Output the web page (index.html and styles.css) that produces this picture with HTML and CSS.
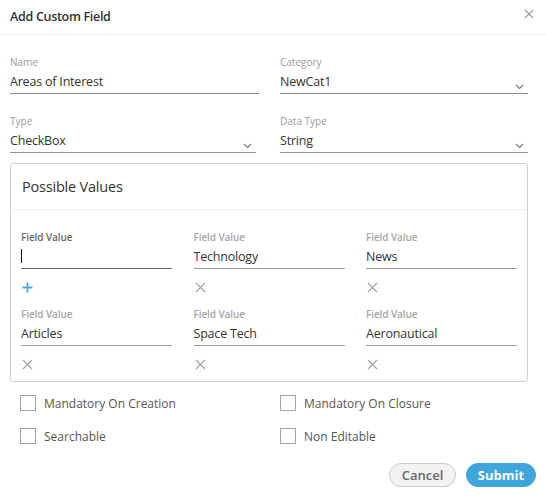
FILE: index.html
```html
<!DOCTYPE html>
<html>
<head>
<meta charset="utf-8">
<link rel="stylesheet" href="styles.css">
</head>
<body>
<div class="dialog">
  <div class="dlg-header">
    <span class="dlg-title">Add Custom Field</span>
    <svg class="close" width="10" height="10" viewBox="0 0 10 10"><path d="M1 1L9 9M9 1L1 9" stroke="#9a9a9a" stroke-width="1.1" fill="none"/></svg>
  </div>
  <div class="dlg-body">
    <div class="form-grid">
      <div class="field">
        <div class="label">Name</div>
        <div class="input">Areas of Interest</div>
      </div>
      <div class="field">
        <div class="label">Category</div>
        <div class="input select">NewCat1<svg class="chev" width="9" height="6" viewBox="0 0 9 6"><path d="M1 1L4.5 4.5L8 1" stroke="#777" stroke-width="1.1" fill="none"/></svg></div>
      </div>
      <div class="field">
        <div class="label">Type</div>
        <div class="input select narrow">CheckBox<svg class="chev" width="9" height="6" viewBox="0 0 9 6"><path d="M1 1L4.5 4.5L8 1" stroke="#777" stroke-width="1.1" fill="none"/></svg></div>
      </div>
      <div class="field">
        <div class="label">Data Type</div>
        <div class="input select">String<svg class="chev" width="9" height="6" viewBox="0 0 9 6"><path d="M1 1L4.5 4.5L8 1" stroke="#777" stroke-width="1.1" fill="none"/></svg></div>
      </div>
    </div>

    <div class="panel">
      <div class="panel-head">Possible Values</div>
      <div class="panel-body">
        <div class="fv">
          <div class="fv-label focus">Field Value</div>
          <div class="fv-input focus"><span class="caret"></span></div>
          <div class="fv-act"><svg width="11" height="11" viewBox="0 0 11 11"><path d="M5.5 0.5V10.5M0.5 5.5H10.5" stroke="#4aa8e0" stroke-width="1.8" fill="none"/></svg></div>
        </div>
        <div class="fv">
          <div class="fv-label">Field Value</div>
          <div class="fv-input">Technology</div>
          <div class="fv-act"><svg width="11" height="11" viewBox="0 0 11 11"><path d="M1 1L10 10M10 1L1 10" stroke="#a0a0a0" stroke-width="1.1" fill="none"/></svg></div>
        </div>
        <div class="fv">
          <div class="fv-label">Field Value</div>
          <div class="fv-input">News</div>
          <div class="fv-act"><svg width="11" height="11" viewBox="0 0 11 11"><path d="M1 1L10 10M10 1L1 10" stroke="#a0a0a0" stroke-width="1.1" fill="none"/></svg></div>
        </div>
        <div class="fv">
          <div class="fv-label">Field Value</div>
          <div class="fv-input">Articles</div>
          <div class="fv-act"><svg width="11" height="11" viewBox="0 0 11 11"><path d="M1 1L10 10M10 1L1 10" stroke="#a0a0a0" stroke-width="1.1" fill="none"/></svg></div>
        </div>
        <div class="fv">
          <div class="fv-label">Field Value</div>
          <div class="fv-input">Space Tech</div>
          <div class="fv-act"><svg width="11" height="11" viewBox="0 0 11 11"><path d="M1 1L10 10M10 1L1 10" stroke="#a0a0a0" stroke-width="1.1" fill="none"/></svg></div>
        </div>
        <div class="fv">
          <div class="fv-label">Field Value</div>
          <div class="fv-input">Aeronautical</div>
          <div class="fv-act"><svg width="11" height="11" viewBox="0 0 11 11"><path d="M1 1L10 10M10 1L1 10" stroke="#a0a0a0" stroke-width="1.1" fill="none"/></svg></div>
        </div>
      </div>
    </div>

    <div class="checks">
      <label class="check"><span class="box"></span>Mandatory On Creation</label>
      <label class="check"><span class="box"></span>Mandatory On Closure</label>
      <label class="check"><span class="box"></span>Searchable</label>
      <label class="check"><span class="box"></span>Non Editable</label>
    </div>

    <div class="actions">
      <button class="btn cancel">Cancel</button>
      <button class="btn submit">Submit</button>
    </div>
  </div>
</div>
</body>
</html>
```

FILE: styles.css
```css
* { box-sizing: border-box; }
html, body { margin: 0; padding: 0; background: #fff; }
body {
  font-family: "Open Sans", "Noto Sans", sans-serif;
  color: #333;
  width: 546px;
  height: 497px;
  overflow: hidden;
}
.dialog { width: 546px; height: 497px; background: #fff; }
.dlg-header {
  height: 35px;
  border-bottom: 1px solid #ebebeb;
  display: flex;
  align-items: center;
  justify-content: space-between;
  padding: 0 12px 2px 10px;
}
.dlg-title { font-size: 12.5px; font-weight: 600; color: #333; letter-spacing: -0.3px; }
.close { margin-top: -4px; }
.dlg-body { padding: 20px 0 0 10px; width: 528px; }
.form-grid {
  display: grid;
  grid-template-columns: 249px 248px;
  column-gap: 21px;
  row-gap: 20px;
}
.label { font-size: 10px; line-height: 14px; color: #9a9a9a; margin-bottom: 3px; }
.input {
  font-size: 12.5px;
  letter-spacing: -0.2px;
  line-height: 18px;
  padding-top: 1px;
  padding-bottom: 2px;
  border-bottom: 1px solid #8e8e8e;
  color: #333;
  display: flex;
  align-items: center;
  justify-content: space-between;
}
.input.narrow { width: 246px; }
.chev { margin: 9px 4px 0 0; }

.panel {
  margin-top: 10px;
  border: 1px solid #cfcfcf;
  border-radius: 3px;
  height: 219px;
}
.panel-head {
  font-size: 14.5px;
  letter-spacing: -0.2px;
  line-height: 20px;
  padding: 13px 0 12px 11px;
  border-bottom: 1px solid #efefef;
  color: #333;
}
.panel-body {
  display: grid;
  grid-template-columns: repeat(3, 151px);
  column-gap: 21.5px;
  row-gap: 10px;
  padding: 20px 9px 0 10px;
}
.fv-label { font-size: 10px; line-height: 14px; color: #a5a5a5; font-weight: 600; margin-bottom: 3px; letter-spacing: -0.1px; }
.fv-label.focus { color: #6a6a6a; }
.fv-input {
  font-size: 12.5px;
  letter-spacing: -0.2px;
  line-height: 18px;
  height: 22px;
  padding-top: 1px;
  padding-bottom: 2px;
  border-bottom: 1px solid #9c9c9c;
  color: #333;
}
.fv-input.focus { border-bottom-color: #666; }
.caret { display: inline-block; width: 1px; height: 14px; background: #111; vertical-align: -2px; }
.fv-act { height: 20px; margin-top: 8px; display: flex; align-items: center; padding-left: 1px; }

.checks {
  display: grid;
  grid-template-columns: 260px 1fr;
  row-gap: 17px;
  padding: 13px 0 0 10px;
}
.check {
  display: flex;
  align-items: center;
  font-size: 12px;
  line-height: 15px;
  color: #555;
}
.box {
  width: 16px;
  height: 16px;
  border: 1px solid #a3a3a3;
  background: #fff;
  margin-right: 8px;
}

.actions {
  display: flex;
  justify-content: flex-end;
  gap: 10px;
  margin: 19px -8px 0 0;
}
.btn {
  font-family: "Open Sans", "Noto Sans", sans-serif;
  font-size: 13px;
  font-weight: 600;
  height: 24px;
  border-radius: 12px;
  padding: 0;
  line-height: 20px;
}
.cancel { width: 67px; background: #f2f2f2; border: 1px solid #c8c8c8; color: #666; }
.submit { width: 70px; background: #3ea6dd; border: 1px solid #3ea6dd; color: #fff; font-weight: 700; }
```
